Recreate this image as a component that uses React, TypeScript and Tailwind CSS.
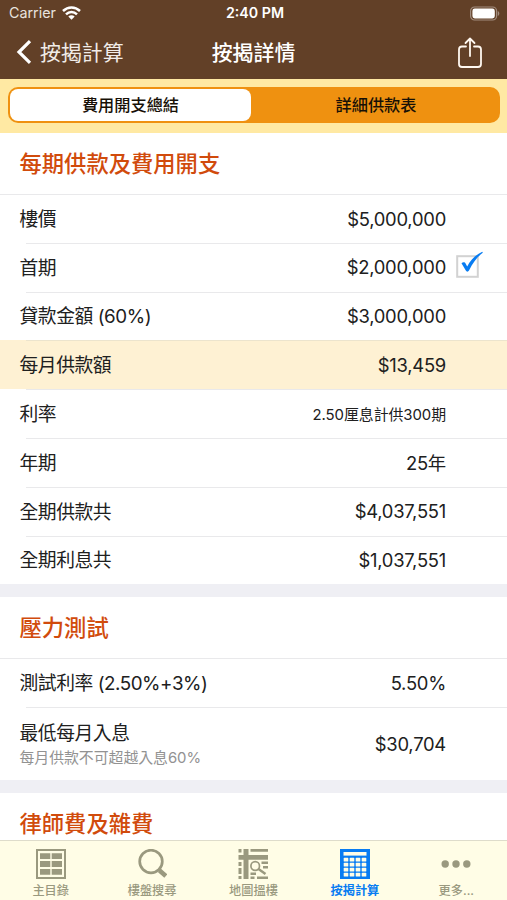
import React from 'react';

interface Row {
  label: string;
  value: string;
  note?: string;
  checked?: boolean;
  highlight?: boolean;
  small?: boolean;
}

const PAYMENT_ROWS: Row[] = [
  { label: '樓價', value: '$5,000,000' },
  { label: '首期', value: '$2,000,000', checked: true },
  { label: '貸款金額 (60%)', value: '$3,000,000' },
  { label: '每月供款額', value: '$13,459', highlight: true },
  { label: '利率', value: '2.50厘息計供300期', small: true },
  { label: '年期', value: '25年' },
  { label: '全期供款共', value: '$4,037,551' },
  { label: '全期利息共', value: '$1,037,551' },
];

const STRESS_ROWS: Row[] = [
  { label: '測試利率 (2.50%+3%)', value: '5.50%' },
  { label: '最低每月入息', value: '$30,704', note: '每月供款不可超越入息60%' },
];

const GridIcon = () => (
  <svg width="30" height="30" viewBox="0 0 30 30" fill="none">
    <rect x="1" y="1" width="28" height="28" stroke="currentColor" strokeWidth="2" />
    <path d="M4 4.2h10.3v5.8H4zM15.7 4.2H26v5.8H15.700zM4 12.1h10.3v5.8H4zM15.7 12.1H26v5.8H15.700zM4 20h10.3v5.8H4zM15.7 20H26v5.8H15.700z" fill="currentColor" />
  </svg>
);

const SearchIcon = () => (
  <svg width="30" height="30" viewBox="0 0 30 30" fill="none" stroke="currentColor">
    <circle cx="14" cy="12.5" r="11.3" strokeWidth="2.7" />
    <path d="M21 20l3 2.5" strokeWidth="3" />
    <path d="M22.5 21.5l6.3 5.5" strokeWidth="4.5" />
  </svg>
);

const MapIcon = () => (
  <svg width="30" height="30" viewBox="0 0 30 30" fill="currentColor">
    <path d="M.5 0h3v3.500h-3zM.5 6h30v4.700H.5zM5.500 0h5v30h-5zM12.500 0h18v2.700h-18z" />
    <path d="M.5 13h3v4h-3zM.5 19h3v6h-3zM.5 27h3v3h-3zM12.500 27.500h4V30h-4zM19 27.500h11.500V30H19zM12.500 23.500H18V26h-5.500zM23.500 12.500h7V15h-7zM25 17h5.500v2.500H25z" />
    <circle cx="17.2" cy="17" r="4.300" fill="none" stroke="currentColor" strokeWidth="1.7" />
    <path d="M20.500 20l7 5" stroke="currentColor" strokeWidth="2.5" />
  </svg>
);

const CalculatorIcon = () => (
  <svg width="30" height="30" viewBox="0 0 30 30">
    <path d="M0 0h30v30H0z" fill="currentColor" />
    <path d="M3.500 3h23v3.600h-23z" fill="#fffde6" />
    {[8.8, 13.8, 18.8, 23.8].map(y =>
      [3.7, 9.7, 15.7, 21.7].map(x => (
        <rect key={`${x}-${y}`} x={x} y={y} width="4.6" height="3.8" rx="0.7" fill="#fffde6" />
      ))
    )}
  </svg>
);

const MoreIcon = () => (
  <svg width="30" height="30" viewBox="0 0 30 30" fill="currentColor">
    <circle cx="4.2" cy="15" r="3.7" />
    <circle cx="15" cy="15" r="3.7" />
    <circle cx="25.8" cy="15" r="3.7" />
  </svg>
);

const TABS = [
  { label: '主目錄', Icon: GridIcon },
  { label: '樓盤搜尋', Icon: SearchIcon },
  { label: '地圖搵樓', Icon: MapIcon },
  { label: '按揭計算', Icon: CalculatorIcon, active: true },
  { label: '更多...', Icon: MoreIcon },
];

const CheckBox = () => (
  <svg className="-mt-1.5 ml-2.5 w-7 shrink-0" height="28" viewBox="0 0 28 28" fill="none">
    <rect x="1.2" y="5.2" width="20.6" height="20.6" fill="white" stroke="#d2d2d2" strokeWidth="2" />
    <path d="M5.500 12.300c1.500-1.500 3.400-1.200 4.200.4l1.500 2.800C14.500 9 19.500 3.800 26.300.8l.5 1C21 6 16.800 12 13 19.500c-.8 1.500-2.500 1.500-3.200 0z" fill="#087cf2" />
  </svg>
);

const SectionTitle = ({ title }: { title: string }) => (
  <h2 className="flex h-[61px] items-center px-[19.5px] text-[22.3px] font-medium text-[#d14b0c]">{title}</h2>
);

const RowItem = ({ row, first }: { row: Row; first: boolean }) => (
  <div className={row.highlight ? 'bg-[#fef1d3]' : ''}>
    <div className={`h-px ${row.highlight ? 'bg-[#ece4cd]' : 'bg-[#e9e9eb]'} ${first ? '' : 'ml-[26px]'}`} />
    <div className={`flex items-center pl-[19.5px] text-[18.8px] tracking-[-0.45px] ${row.note ? 'h-[72px]' : 'h-[47.8px]'}`}>
      <div className="flex-1 whitespace-nowrap pt-0.5">
        <p className="leading-6">{row.label}</p>
        {row.note && <p className="mt-px text-[14.9px] leading-[22px] tracking-[-0.05px] text-[#929292]">{row.note}</p>}
      </div>
      <span className={row.small ? 'pt-0.5 text-[14.9px] tracking-[-0.05px]' : 'pt-px text-[18.4px] tracking-[-0.25px]'}>{row.value}</span>
      <div className="w-[61px] shrink-0">{row.checked && <CheckBox />}</div>
    </div>
  </div>
);

export default function App() {
  return (
    <div className="flex h-[900px] w-[507px] flex-col overflow-hidden bg-white font-['Inter','Noto_Sans_CJK_TC',sans-serif] text-[#202020]">
      <header className="h-[79px] shrink-0 bg-[#624027] text-white">
        <div className="grid h-[27px] grid-cols-3 items-center pl-[9px] pr-[7px] text-[14.2px] leading-none">
          <div className="flex items-center gap-1.5 text-[#e9e3df]">
            <span className="text-[14.3px]">Carrier</span>
            <svg width="19" height="14" viewBox="0 0 19 14" fill="none" stroke="white" strokeWidth="2.5">
              <path d="M1 5C6 .2 13 .2 18 5M4 8.300c3.200-3.100 7.800-3.100 11 0" />
              <path d="M6.300 10.500c1.800-1.700 4.600-1.700 6.400 0L9.500 13.700z" fill="white" stroke="none" />
            </svg>
          </div>
          <span className="pl-px text-center font-semibold">2:40 PM</span>
          <svg className="ml-auto" width="31" height="15" viewBox="0 0 31 15" fill="none">
            <rect x="1.6" y="1" width="26" height="13" rx="4" stroke="#a18c7e" strokeWidth="1.2" />
            <rect x="3.4" y="2.6" width="22.4" height="9.8" rx="2.4" fill="white" />
            <path d="M28.800 5v5c2-.8 2-4.200 0-5z" fill="#a18c7e" />
          </svg>
        </div>
        <div className="grid h-[51px] grid-cols-3 items-center pl-4 pr-6">
          <button className="flex items-center gap-2 text-[20.9px] text-[#f1ece8]">
            <svg width="16" height="24" viewBox="0 0 16 24" fill="none" stroke="white" strokeWidth="3.2">
              <path d="M14 1.200L3 12l11 10.800" />
            </svg>
            按揭計算
          </button>
          <h1 className="pl-2 text-center text-[20.9px] font-medium">按揭詳情</h1>
          <svg className="ml-auto" width="26" height="32" viewBox="0 0 26 32" fill="none" stroke="#fff8f0" strokeWidth="1.8" strokeLinecap="round" strokeLinejoin="round">
            <path d="M9 9.500H5a3 3 0 0 0-3 3V27a3 3 0 0 0 3 3h16a3 3 0 0 0 3-3V12.500a3 3 0 0 0-3-3h-4M13 19V2M8.500 6L13 1.500 17.500 6" />
          </svg>
        </div>
      </header>

      <div className="h-[54px] shrink-0 bg-[#ffe9a3] pl-2 pr-[7px] pt-2">
        <div className="grid h-9 grid-cols-[241px_1fr] rounded-[10px] bg-[#ef9110] p-0.5 text-[16.2px] text-[#171006]">
          <button className="rounded-lg bg-white font-medium">費用開支總結</button>
          <button className="pl-[3px] font-medium">詳細供款表</button>
        </div>
      </div>

      <main className="min-h-0 flex-1 overflow-hidden bg-[#efeff4]">
        <section className="bg-white">
          <SectionTitle title="每期供款及費用開支" />
          {PAYMENT_ROWS.map((row, i) => <RowItem key={row.label} row={row} first={i === 0} />)}
        </section>
        <section className="mt-[13px] bg-white">
          <SectionTitle title="壓力測試" />
          {STRESS_ROWS.map((row, i) => <RowItem key={row.label} row={row} first={i === 0} />)}
        </section>
        <section className="mt-[13px] bg-white">
          <SectionTitle title="律師費及雜費" />
        </section>
      </main>

      <nav className="grid h-[60px] shrink-0 grid-cols-5 border-t border-[#dedccb] bg-[#fffde6]">
        {TABS.map(({ label, Icon, active }) => (
          <button key={label} className={`flex flex-col items-center pt-2 text-[12.2px] ${active ? 'font-bold text-[#087cf2]' : 'font-medium text-[#9a997f]'}`}>
            <Icon />
            <span className="mt-1 leading-4">{label}</span>
          </button>
        ))}
      </nav>
    </div>
  );
}
